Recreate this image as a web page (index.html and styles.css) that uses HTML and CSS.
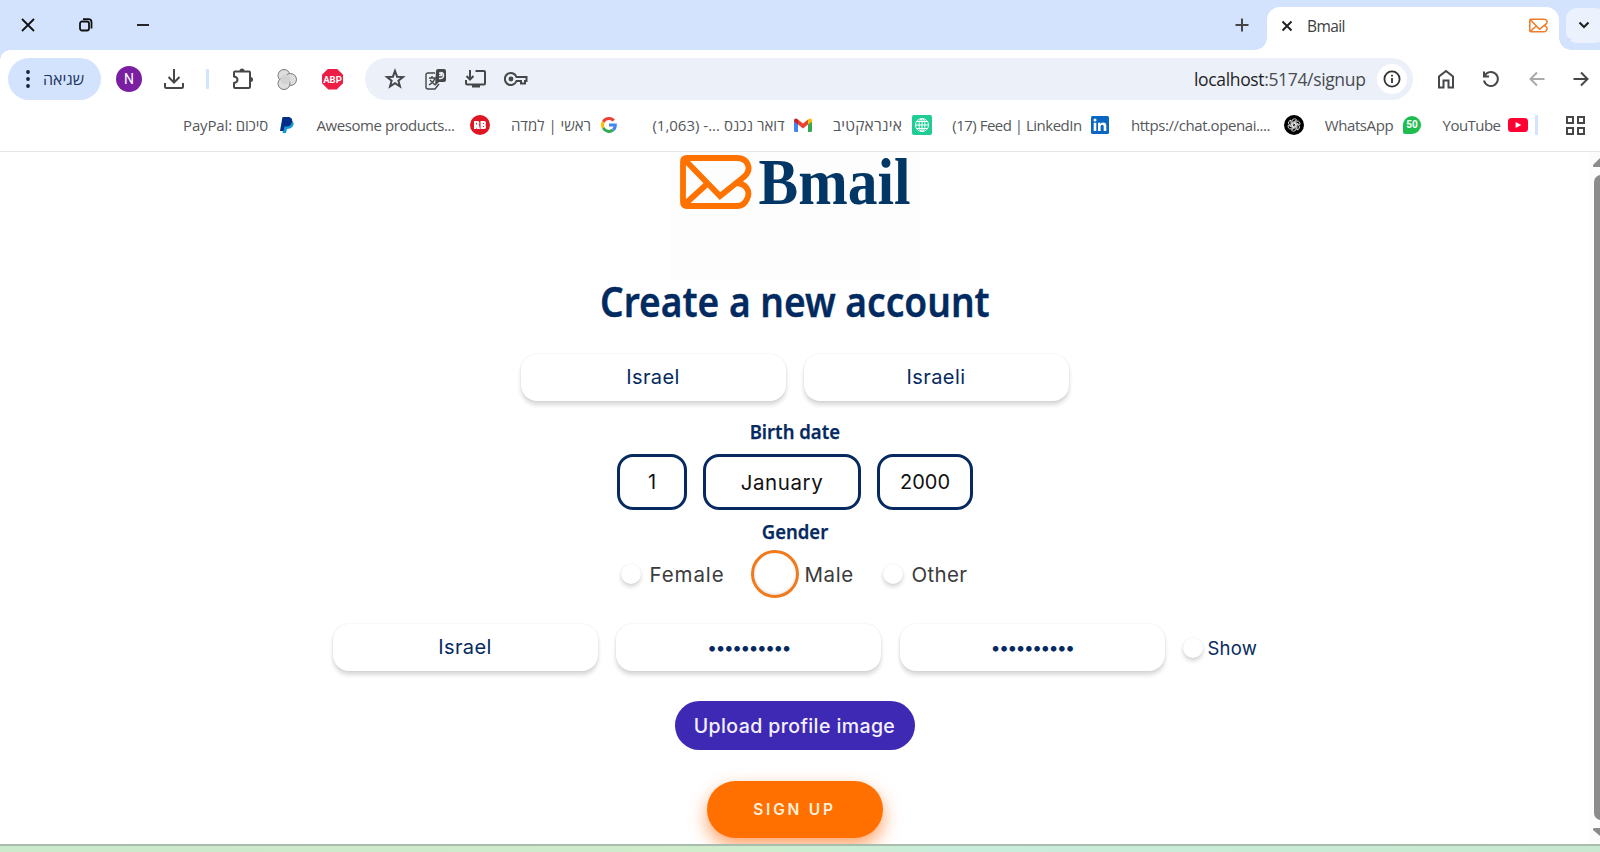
FILE: index.html
```html
<!DOCTYPE html>
<html lang="en">
<head>
<meta charset="utf-8">
<title>Bmail</title>
<link rel="stylesheet" href="styles.css">
</head>
<body>
<svg width="0" height="0" class="defs">
  <symbol id="mail" viewBox="0 0 72 54"><path d="M7 3H57C68 3 72 14 65 21L40 41L5 5M55 28C66 28 71 36 67 44Q64 51 57 51H7Q3 51 3 47V7Q3 3 7 3M4 50L27 29" fill="none" stroke="currentColor" stroke-width="5.8"/></symbol>
</svg>
<div class="browser">
  <header class="tabstrip">
    <svg class="win" width="16" height="16" viewBox="0 0 16 16"><path d="M2 2L14 14M14 2L2 14"/></svg>
    <svg class="win" width="16" height="16" viewBox="0 0 16 16"><rect x="2" y="4.500" width="9" height="9" rx="2"/><path d="M5 2.200H10.500Q13.500 2.200 13.500 5.200V11.500"/></svg>
    <svg class="win" width="16" height="16" viewBox="0 0 16 16"><path d="M2 8H14"/></svg>
    <svg class="newtab" width="14" height="14" viewBox="0 0 14 14"><path d="M7 .5V13.500M.5 7H13.500"/></svg>
    <div class="tab">
      <svg width="12" height="12" viewBox="0 0 12 12"><path d="M1.500 1.500L10.500 10.500M10.500 1.500L1.500 10.500"/></svg>
      <span class="tab-title">Bmail</span>
      <svg class="favicon" width="19" height="15"><use href="#mail"/></svg>
    </div>
    <div class="tab-search"><svg width="12" height="8" viewBox="0 0 12 8"><path d="M1.500 1.500L6 6L10.500 1.500"/></svg></div>
  </header>
  <div class="toolbar">
    <div class="error-pill"><svg width="4" height="20" viewBox="0 0 4 20"><circle cx="2" cy="3" r="1.900"/><circle cx="2" cy="10" r="1.900"/><circle cx="2" cy="17" r="1.900"/></svg><span>שגיאה</span></div>
    <div class="avatar">N</div>
    <svg class="ico download" width="22" height="22" viewBox="0 0 22 22"><path d="M11 1V14M5.500 9L11 14.500L16.500 9M2 15V18.500Q2 20 3.500 20H18.500Q20 20 20 18.500V15"/></svg>
    <i class="sep"></i>
    <svg class="ico puzzle" width="22" height="22" viewBox="0 0 22 22"><path d="M3 3.500H17Q18 3.500 18 4.500V18.500Q18 20 16.500 20H3Q2 20 2 19V15Q5.500 14.500 5.500 11.800Q5.500 9 2 8.500V4.500Q2 3.500 3 3.500Z"/><path class="solid" d="M7.500 3Q7.500 .5 10 .5T12.500 3ZM18.500 9Q21 9 21 11.500T18.500 14Z"/></svg>
    <svg class="rings" width="20" height="21" viewBox="0 0 20 21"><circle cx="7" cy="6.500" r="6"/><circle cx="13.500" cy="10.500" r="6"/><circle cx="7" cy="14.500" r="6"/><circle class="core" cx="8.500" cy="10.500" r="5"/></svg>
    <div class="abp">ABP</div>
    <div class="omnibox">
      <svg class="ico" width="22" height="22" viewBox="0 0 22 22"><path d="M11 3L13.100 8.700L19 9L14.400 12.700L16 18.500L11 15.200L6 18.500L7.600 12.700L3 9L8.900 8.700Z"/></svg>
      <svg class="ico" width="22" height="22" viewBox="0 0 22 22"><path class="thin" d="M10 5H3Q1 5 1 7V19Q1 21 3 21H10L14 16M4 10H11M7 8V10M10 10Q9 14 4 17M5 12L10 17"/><path class="solid" d="M11 3Q11 1 13 1H19Q21 1 21 3V12Q21 14 19 14H14L10 18Z"/><path class="cut" d="M14 7.500H16.500Q16.500 5 14 5M14 10.500Q18.500 11 18.500 7.500Q18.500 4.500 15.500 4.500"/></svg>
      <svg class="ico" width="22" height="22" viewBox="0 0 22 22"><path d="M10.500 3H19Q20 3 20 4V15.500Q20 16.500 19 16.500H2.500Q1 16.500 1 15V12M5 2V11M1.500 8L5 11.500L8.500 8M7 18.500H15"/></svg>
      <svg class="ico key" width="24" height="16" viewBox="0 0 24 16"><path d="M12.500 6A6 6 0 1 0 12.500 10H17V12.500H21V10H22.500V6Z"/><circle class="solid" cx="7" cy="8" r="2.400"/></svg>
      <span class="url"><b>localhost</b>:5174/signup</span>
      <span class="info"><svg width="18" height="18" viewBox="0 0 18 18"><circle cx="9" cy="9" r="7.600"/><path d="M9 8V13M9 4.700V6.500"/></svg></span>
    </div>
    <svg class="ico home" width="18" height="20" viewBox="0 0 18 20"><path d="M2 18.500V7.500L9 2L16 7.500V18.500H11.500V11.500H6.500V18.500Z"/></svg>
    <svg class="ico reload" width="18" height="18" viewBox="0 0 18 18"><path d="M2 1.500V6.500H7M2.500 6A7 7 0 1 1 2 10.500"/></svg>
    <svg class="ico back" width="16" height="16" viewBox="0 0 16 16"><path d="M15.500 8H2M8 1.500L1.500 8L8 14.500"/></svg>
    <svg class="ico fwd" width="16" height="16" viewBox="0 0 16 16"><path d="M.5 8H14M8 1.500L14.500 8L8 14.500"/></svg>
  </div>
  <nav class="bookmarks">
    <span class="bm b1"><span>PayPal: סיכום</span></span>
    <svg class="i1" width="14" height="16" viewBox="0 0 14 16"><path fill="#179bd7" d="M5 3H11Q15 5 13 9Q11 12 7 12L6 16H2.500Z"/><path fill="#002f86" d="M2.500 0H9Q13 1 12 5Q11 9.500 6.500 9.500H4.500L3.500 14H0Z"/></svg>
    <span class="bm b2"><span>Awesome products...</span></span>
    <svg class="i2" width="20" height="20" viewBox="0 0 20 20"><circle cx="10" cy="10" r="10" fill="#e01523"/><path fill="#fff" fill-rule="evenodd" d="M4 6H8Q10 6.500 9 10L10 14H7L6.300 12V14H4ZM10.500 6H15Q17 8 15.500 10Q17 14 14 14H10.500ZM6 8V9.500H7V8ZM13 8V9H14V8ZM13 11V12H14V11Z"/></svg>
    <span class="bm b3"><span>ראשי | למדה</span></span>
    <svg class="i3" width="16" height="16" viewBox="0 0 16 16" fill="none" stroke-width="3"><path stroke="#ea4335" d="M2.300 5A6.500 6.500 0 0 1 12.800 3.500"/><path stroke="#fbbc05" d="M2.300 5A6.500 6.500 0 0 0 2.300 11"/><path stroke="#34a853" d="M2.300 11A6.500 6.500 0 0 0 12 13"/><path stroke="#4285f4" d="M12 13Q14.300 11.500 14.300 8H8"/></svg>
    <span class="bm b4" dir="rtl"><span>דואר נכנס ...- (1,063)</span></span>
    <svg class="i4" width="18" height="14" viewBox="0 0 18 14"><path fill="#4285f4" d="M0 3L4 6V14H1.500Q0 14 0 12.500Z"/><path fill="#34a853" d="M14 6L18 3V12.500Q18 14 16.500 14H14Z"/><path fill="#ea4335" d="M4 1.500L9 5.500L14 1.500V6.500L9 10.500L4 6.500Z"/><path fill="#c5221f" d="M0 2.500Q.5-1 4 1.500V6.500L0 3.500Z"/><path fill="#fbbc04" d="M18 2.500Q17.500-1 14 1.500V6.500L18 3.500Z"/></svg>
    <span class="bm b5"><span>אינראקטיב</span></span>
    <svg class="i5" width="20" height="20" viewBox="0 0 20 20"><rect width="20" height="20" rx="2" fill="#1fcc93"/><g fill="none" stroke="#fff" stroke-width="1"><circle cx="10" cy="10" r="6.500"/><ellipse cx="10" cy="10" rx="3" ry="6.500"/><path d="M10 3.500V16.500M3.500 10H16.500M4.500 6.500H15.500M4.500 13.500H15.500"/></g></svg>
    <span class="bm b6"><span>(17) Feed | LinkedIn</span></span>
    <svg class="i6" width="18" height="18" viewBox="0 0 18 18"><rect width="18" height="18" rx="1.500" fill="#0a66c2"/><path fill="#fff" d="M2.700 6.800H5.300V15H2.700ZM7 6.800H9.500V8Q10.500 6.600 12.300 6.600Q15.300 6.600 15.300 10V15H12.700V10.600Q12.700 8.800 11.300 8.800Q9.600 8.800 9.600 10.600V15H7Z"/><circle cx="4" cy="4" r="1.500" fill="#fff"/></svg>
    <span class="bm b7"><span>https://chat.openai....</span></span>
    <svg class="i7" width="20" height="20" viewBox="0 0 20 20"><circle cx="10" cy="10" r="10" fill="#000"/><g fill="none" stroke="#fff" stroke-width=".8"><path id="petal" d="M8 10.800V6Q8.300 3.700 10.500 3.800Q12 4 12.700 5L8.800 7.300V10"/><use href="#petal" transform="rotate(60 10 10)"/><use href="#petal" transform="rotate(120 10 10)"/><use href="#petal" transform="rotate(180 10 10)"/><use href="#petal" transform="rotate(240 10 10)"/><use href="#petal" transform="rotate(300 10 10)"/></g></svg>
    <span class="bm b8"><span>WhatsApp</span></span>
    <span class="whats i8">50</span>
    <span class="bm b9"><span>YouTube</span></span>
    <svg class="i9" width="20" height="14" viewBox="0 0 21 14" preserveAspectRatio="none"><rect width="21" height="14" rx="3.500" fill="#ff0033"/><path fill="#fff" d="M8 4L14 7L8 10Z"/></svg>
    <i class="sep small"></i>
    <svg class="ico apps" width="19" height="19" viewBox="0 0 19 19"><path d="M1 1H7V7H1ZM12 1H18V7H12ZM1 12H7V18H1ZM12 12H18V18H12Z"/></svg>
  </nav>
  <div class="viewport">
    <main class="signup">
      <div class="logo">
        <svg class="brand" width="240" height="54" viewBox="0 0 240 54"><svg x="0" y="0" width="72" height="54" color="#ff7200"><use href="#mail"/></svg><text class="wordmark" x="78.500" y="49" textLength="152" lengthAdjust="spacingAndGlyphs">Bmail</text></svg>
      </div>
      <h1><span>Create a new account</span></h1>
      <div class="row names"><div class="field">Israel</div><div class="field">Israeli</div></div>
      <h2 class="birth"><span>Birth date</span></h2>
      <div class="row dates"><div class="select day">1</div><div class="select month">January</div><div class="select year">2000</div></div>
      <h2 class="gender"><span>Gender</span></h2>
      <div class="row radios">
        <i class="dot"></i><span class="opt female">Female</span>
        <i class="dot picked"></i><span class="opt male">Male</span>
        <i class="dot"></i><span class="opt other">Other</span>
      </div>
      <div class="row account">
        <div class="field">Israel</div>
        <div class="field secret">••••••••••</div>
        <div class="field secret">••••••••••</div>
        <i class="dot show-dot"></i><span class="show">Show</span>
      </div>
      <div class="upload">Upload profile image</div>
      <div class="submit">SIGN UP</div>
    </main>
    <aside class="scroll">
      <svg width="12" height="9" viewBox="0 0 12 9"><path d="M0 7Q-1 9 2 9H12V0H7Z"/></svg>
      <i class="thumb"></i>
      <svg width="12" height="8" viewBox="0 0 12 8"><path d="M0 2Q-1 0 2 0H12V8H7Z"/></svg>
    </aside>
  </div>
  <footer class="strip"></footer>
</div>
</body>
</html>
```
FILE: styles.css
```css
* { box-sizing: border-box; }
body { margin: 0; background: #fff; font-family: "Open Sans", "Noto Sans", "Liberation Sans", sans-serif; color: #3c4043; }
svg { display: block; flex: none; }
.defs { position: absolute; }
.browser { width: 1600px; height: 852px; overflow: hidden; display: flex; flex-direction: column; background: #fff; }

/* Tab strip */
.tabstrip { height: 50px; flex: none; background: #d3e2fd; display: flex; align-items: center; padding-left: 20px; }
.win { fill: none; stroke: #111; stroke-width: 1.8; margin: -1px 41.5px 0 0; }
.newtab { fill: none; stroke: #444; stroke-width: 2; margin-left: 1042px; }
.tab { width: 292px; height: 43px; flex: none; margin: 7px 0 0 18.5px; background: #fff; border-radius: 13px 13px 0 0; display: flex; align-items: center; padding: 0 11px 6px 14px; position: relative; }
.tab::before, .tab::after { content: ""; position: absolute; bottom: 0; width: 12px; height: 12px; }
.tab::before { left: -12px; background: radial-gradient(circle at 0 0, #d3e2fd 11.5px, #fff 12px); }
.tab::after { right: -12px; background: radial-gradient(circle at 100% 0, #d3e2fd 11.5px, #fff 12px); }
.tab svg { fill: none; stroke: #222; stroke-width: 2; }
.tab-title { font-size: 15.5px; letter-spacing: -.6px; margin-left: 14px; margin-top: 1px; }
.tab .favicon { margin-left: auto; color: #ef7d2b; stroke: none; }
.tab-search { width: 40px; height: 35px; margin-left: 7px; border-radius: 11px; background: #ebf1fd; display: flex; align-items: center; padding-left: 12px; flex: none; }
.tab-search svg { fill: none; stroke: #222; stroke-width: 2.2; }

/* Toolbar */
.toolbar { height: 58px; flex: none; display: flex; align-items: center; padding-left: 8px; }
.toolbar::before { content: ""; position: absolute; left: 0; top: 50px; width: 10px; height: 10px; background: radial-gradient(circle at 100% 100%, #fff 9.5px, #d3e2fd 10px); }
.error-pill { width: 93px; height: 42px; border-radius: 21px; background: #d3e2fd; display: flex; align-items: center; padding-left: 18px; gap: 13px; color: #1c355e; font-size: 16px; flex: none; }
.error-pill svg { fill: #14233c; }
.avatar { width: 26px; height: 26px; margin-left: 15px; border-radius: 50%; background: #7b1fa2; color: #fff; font: 14px/26px Roboto, sans-serif; text-align: center; flex: none; }
.ico { fill: none; stroke: #454749; stroke-width: 2; }
.ico .solid { fill: #454749; stroke: none; }
.ico .thin { stroke-width: 1.4; }
.ico .cut { stroke: #eef2fa; stroke-width: 1.5; }
.download { margin-left: 21px; }
.sep { width: 3px; height: 20px; background: #d3e2fd; border-radius: 1px; margin-left: 21px; flex: none; }
.puzzle { margin-left: 23px; }
.rings { margin-left: 23px; fill: #dedede; stroke: #777; stroke-width: 1; }
.rings .core { stroke: none; fill: #d2d2d2; }
.abp { width: 21px; height: 21px; margin-left: 25px; background: #ed1e45; color: #fff; font: bold 9.5px/21px Roboto, sans-serif; text-align: center; clip-path: polygon(30% 0, 70% 0, 100% 30%, 100% 70%, 70% 100%, 30% 100%, 0 70%, 0 30%); flex: none; }
.omnibox { width: 1048px; height: 42px; margin-left: 22px; border-radius: 21px; background: #ecf0f9; display: flex; align-items: center; gap: 18.5px; padding: 0 6px 0 19px; flex: none; }
.key { margin-left: -2px; }
.url { margin-left: auto; font-size: 17.5px; white-space: nowrap; color: #494b4e; letter-spacing: -.35px; }
.url b { font-weight: 400; color: #1f1f1f; }
.info { width: 30px; height: 30px; margin-left: -7px; border-radius: 50%; background: #fff; display: flex; align-items: center; justify-content: center; }
.info svg { fill: none; stroke: #333; stroke-width: 1.8; }
.home { margin-left: 24px; }
.reload { margin-left: 27px; }
.back { margin-left: 29px; stroke: #aaa; }
.fwd { margin-left: 28px; }

/* Bookmarks */
.bookmarks { height: 44px; flex: none; display: flex; align-items: center; border-bottom: 1px solid #e6e6e8; padding: 0 0 9px 182px; }
.bookmarks > * { flex: none; }
.bm { font-size: 15px; white-space: nowrap; color: #55585b; display: flex; justify-content: center; letter-spacing: -.42px; }
.b1 { width: 87px; letter-spacing: -.15px; } .i1 { margin-left: 11px; }
.b2 { width: 139px; margin-left: 22px; } .i2 { margin-left: 15px; }
.b3 { width: 80px; margin-left: 21px; letter-spacing: 0; } .i3 { margin-left: 10px; }
.b4 { width: 135px; margin-left: 34px; letter-spacing: 0; } .i4 { margin-left: 8px; }
.b5 { width: 71px; margin-left: 20px; font-size: 15.5px; letter-spacing: .2px; } .i5 { margin-left: 9px; }
.b6 { width: 130px; margin-left: 20px; letter-spacing: -.5px; } .i6 { margin-left: 9px; }
.b7 { width: 141px; margin-left: 21px; } .i7 { margin-left: 13px; }
.b8 { width: 70px; margin-left: 20px; } .i8 { margin-left: 9px; }
.b9 { width: 59px; margin-left: 21px; letter-spacing: -.55px; } .i9 { margin-left: 7px; }
.whats { width: 18px; height: 18px; border-radius: 9px 9px 9px 2px; background: #1fbd50; color: #fff; font: bold 10px/18px Roboto, sans-serif; text-align: center; }
.sep.small { margin-left: 7px; }
.apps { margin-left: 28px; }

/* Page */
.viewport { height: 692px; flex: none; display: flex; background: #fff; }
.signup { width: 1589px; flex: none; display: flex; flex-direction: column; align-items: center; color: #062a5f; font-family: Inter, sans-serif; }
.logo { width: 250px; height: 129px; padding: 2.5px 0 0 10.5px; background: #fdfdfd; flex: none; }
.brand { overflow: visible; }
.wordmark { font: bold 65px "Liberation Serif", serif; fill: #023765; }
h1, h2 { margin: 0; font-family: "Noto Sans", sans-serif; white-space: nowrap; flex: none; }
h1 { height: 73px; font-size: 41.5px; font-weight: 600; line-height: 40px; color: #002a60; -webkit-text-stroke: .4px #002a60; }
h1 span { display: block; transform: scaleX(.894); }
.row { display: flex; align-items: center; justify-content: center; flex: none; }
.field { width: 265px; height: 47px; border-radius: 16px; display: flex; align-items: center; justify-content: center; font-size: 20px; background: #fff; box-shadow: 0 4px 4px rgba(0,0,0,.15), 0 0 2px rgba(0,0,0,.1); flex: none; letter-spacing: .4px; padding-bottom: 1px; }
.names { gap: 18px; height: 47px; }
h2 { font-size: 20px; font-weight: 600; line-height: 24px; -webkit-text-stroke: .25px #062a5f; }
h2 span { display: block; transform: scaleX(.925); }
.birth { margin-top: 19px; }
.dates { gap: 16px; margin-top: 10px; color: #111; padding-left: 1px; }
.select { height: 56px; border: 3px solid #062a5f; border-radius: 16px; display: flex; align-items: center; justify-content: center; font-size: 20px; }
.day { width: 70px; } .month { width: 158px; font-size: 20.5px; letter-spacing: .6px; } .year { width: 96px; }
.gender { margin-top: 10px; }
.radios { height: 48px; margin-top: 6px; color: #3b3b3b; font-size: 20.5px; }
.dot { width: 20px; height: 20px; border-radius: 50%; background: #fff; box-shadow: 0 3px 4px rgba(0,0,0,.16), 0 0 2px rgba(0,0,0,.08); flex: none; }
.picked { width: 48px; height: 48px; border: 3px solid #f07a1c; box-shadow: inset 0 -1px 3px rgba(0,0,0,.14); }
.opt { white-space: nowrap; letter-spacing: .3px; }
.female { width: 75px; margin: 0 26px 0 9px; letter-spacing: .9px; }
.male { width: 49px; margin: 0 29px 0 6px; letter-spacing: .6px; }
.other { width: 57px; margin-left: 9px; }
.account { gap: 18.5px; margin-top: 26px; height: 47px; }
.secret { font-size: 18px; letter-spacing: -1.85px; padding-bottom: 0; }
.show { width: 49px; margin-left: -14px; font-size: 18.5px; letter-spacing: .2px; }
.upload { width: 240px; height: 49px; margin-top: 30px; border-radius: 25px; background: #3e29b5; color: #f4f1ff; display: flex; align-items: center; justify-content: center; font-size: 19.5px; font-weight: 500; letter-spacing: .4px; white-space: nowrap; flex: none; }
.submit { width: 176px; height: 57px; margin-top: 31px; border-radius: 29px; background: #ff7000; color: #fff0dc; display: flex; align-items: center; justify-content: center; font: 600 15.5px Inter, sans-serif; letter-spacing: 2.8px; box-shadow: 0 8px 18px rgba(255,100,0,.6); flex: none; }
.scroll { width: 11px; flex: none; background: #fcfcfc; overflow: hidden; padding: 6px 0 0 4px; fill: #8b8b8b; }
.thumb { display: block; width: 15px; height: 645px; margin: 8px 0 8px 1px; border-radius: 7px; background: #8b8b8b; }
.strip { height: 8px; flex: none; border-top: 2px solid #a9bdae; background: linear-gradient(90deg, #cbe9cb 0, #cfedcb 45%, #c9eddc 60%, #c8e9cf 100%); }
```
